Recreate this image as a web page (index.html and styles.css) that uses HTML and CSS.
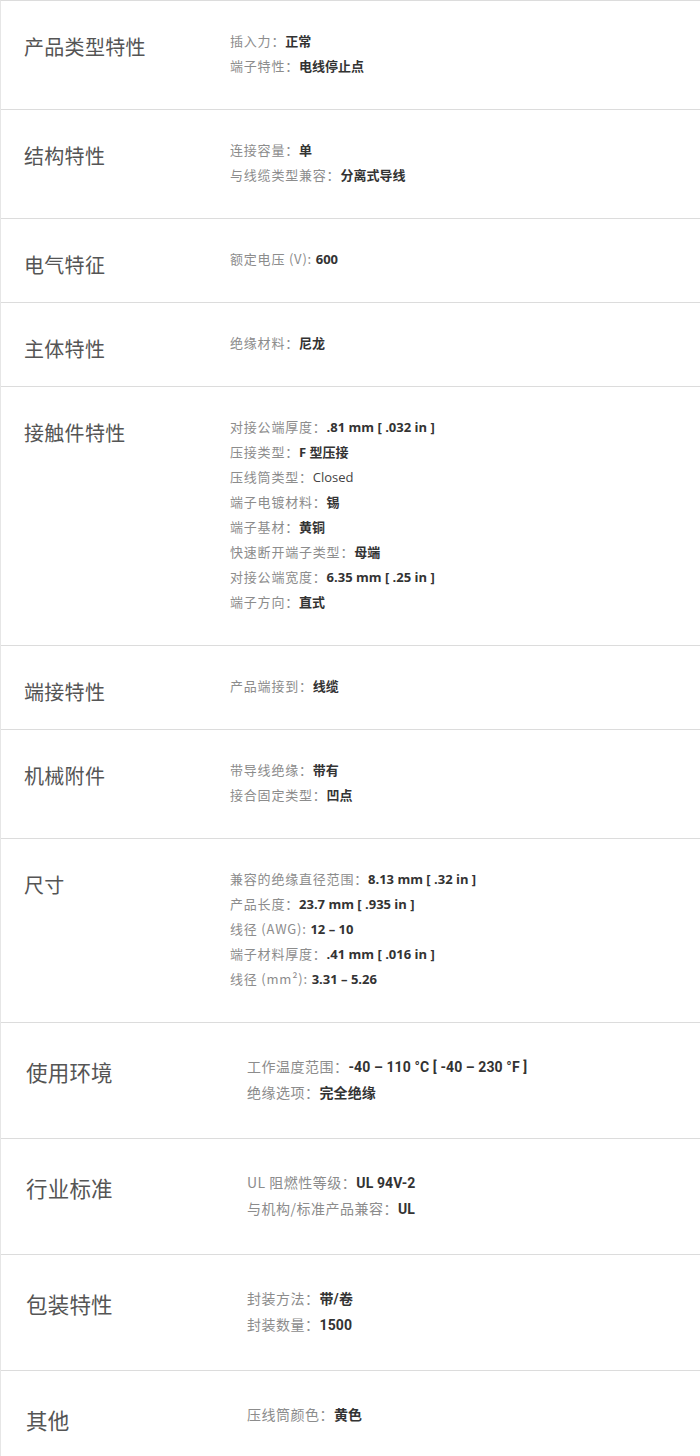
FILE: index.html
```html
<!DOCTYPE html>
<html lang="zh-CN">
<head>
<meta charset="utf-8">
<title>产品特性</title>
<link rel="stylesheet" href="styles.css">
</head>
<body>
<div class="spec-table">
  <div class="spec-row">
    <div class="spec-label">产品类型特性</div>
    <ul class="spec-values">
      <li><span class="k">插入力：</span><span class="v">正常</span></li>
      <li><span class="k">端子特性：</span><span class="v">电线停止点</span></li>
    </ul>
  </div>
  <div class="spec-row">
    <div class="spec-label">结构特性</div>
    <ul class="spec-values">
      <li><span class="k">连接容量：</span><span class="v">单</span></li>
      <li><span class="k">与线缆类型兼容：</span><span class="v">分离式导线</span></li>
    </ul>
  </div>
  <div class="spec-row">
    <div class="spec-label">电气特征</div>
    <ul class="spec-values">
      <li><span class="k">额定电压 (V):</span> <span class="v">600</span></li>
    </ul>
  </div>
  <div class="spec-row">
    <div class="spec-label">主体特性</div>
    <ul class="spec-values">
      <li><span class="k">绝缘材料：</span><span class="v">尼龙</span></li>
    </ul>
  </div>
  <div class="spec-row">
    <div class="spec-label">接触件特性</div>
    <ul class="spec-values">
      <li><span class="k">对接公端厚度：</span><span class="v">.81 mm [ .032 in ]</span></li>
      <li><span class="k">压接类型：</span><span class="v">F 型压接</span></li>
      <li><span class="k">压线筒类型：</span><span class="v plain">Closed</span></li>
      <li><span class="k">端子电镀材料：</span><span class="v">锡</span></li>
      <li><span class="k">端子基材：</span><span class="v">黄铜</span></li>
      <li><span class="k">快速断开端子类型：</span><span class="v">母端</span></li>
      <li><span class="k">对接公端宽度：</span><span class="v">6.35 mm [ .25 in ]</span></li>
      <li><span class="k">端子方向：</span><span class="v">直式</span></li>
    </ul>
  </div>
  <div class="spec-row">
    <div class="spec-label">端接特性</div>
    <ul class="spec-values">
      <li><span class="k">产品端接到：</span><span class="v">线缆</span></li>
    </ul>
  </div>
  <div class="spec-row">
    <div class="spec-label">机械附件</div>
    <ul class="spec-values">
      <li><span class="k">带导线绝缘：</span><span class="v">带有</span></li>
      <li><span class="k">接合固定类型：</span><span class="v">凹点</span></li>
    </ul>
  </div>
  <div class="spec-row">
    <div class="spec-label">尺寸</div>
    <ul class="spec-values">
      <li><span class="k">兼容的绝缘直径范围：</span><span class="v">8.13 mm [ .32 in ]</span></li>
      <li><span class="k">产品长度：</span><span class="v">23.7 mm [ .935 in ]</span></li>
      <li><span class="k">线径 (AWG):</span> <span class="v">12 – 10</span></li>
      <li><span class="k">端子材料厚度：</span><span class="v">.41 mm [ .016 in ]</span></li>
      <li><span class="k">线径 (mm²):</span> <span class="v">3.31 – 5.26</span></li>
    </ul>
  </div>
  <div class="spec-row spec-row--large">
    <div class="spec-label">使用环境</div>
    <ul class="spec-values">
      <li><span class="k">工作温度范围：</span><span class="v">-40 – 110 °C [ -40 – 230 °F ]</span></li>
      <li><span class="k">绝缘选项：</span><span class="v">完全绝缘</span></li>
    </ul>
  </div>
  <div class="spec-row spec-row--large">
    <div class="spec-label">行业标准</div>
    <ul class="spec-values">
      <li><span class="k">UL 阻燃性等级：</span><span class="v">UL 94V-2</span></li>
      <li><span class="k">与机构/标准产品兼容：</span><span class="v">UL</span></li>
    </ul>
  </div>
  <div class="spec-row spec-row--large">
    <div class="spec-label">包装特性</div>
    <ul class="spec-values">
      <li><span class="k">封装方法：</span><span class="v">带/卷</span></li>
      <li><span class="k">封装数量：</span><span class="v">1500</span></li>
    </ul>
  </div>
  <div class="spec-row spec-row--large">
    <div class="spec-label">其他</div>
    <ul class="spec-values">
      <li><span class="k">压线筒颜色：</span><span class="v">黄色</span></li>
    </ul>
  </div>
</div>
</body>
</html>
```

FILE: styles.css
```css
html, body {
  margin: 0;
  padding: 0;
  background: #ffffff;
}

body {
  font-family: "Noto Sans CJK SC", "Noto Sans", sans-serif;
  color: #333333;
}

.spec-table {
  border-top: 1px solid #dcdcdc;
  border-left: 1px solid #e6e6e6;
}

.spec-row {
  display: grid;
  grid-template-columns: 206px 1fr;
  align-items: start;
  padding: 27px 0 31px 23px;
  border-bottom: 1px solid #dcdcdc;
}

.spec-label {
  height: 25px;
  margin-top: 6px;
  margin-bottom: -6px;
  font-size: 20px;
  line-height: 25px;
  color: #555555;
  letter-spacing: 0.3px;
  white-space: nowrap;
}

.spec-values {
  list-style: none;
  margin: 0;
  padding: 0;
}

.spec-values li {
  height: 25px;
  font-size: 13px;
  line-height: 25px;
  letter-spacing: 0.8px;
  white-space: nowrap;
}

.k {
  color: #8c8c8c;
}

.v {
  color: #333333;
  font-weight: 700;
  font-family: "Open Sans", "Noto Sans CJK SC", sans-serif;
  letter-spacing: 0;
}

.v.plain {
  font-weight: 400;
  color: #444444;
}

.spec-row--large {
  grid-template-columns: 221px 1fr;
  padding: 30px 0 33px 25px;
}

.spec-row--large .spec-label {
  height: 26px;
  font-size: 21.5px;
  line-height: 26px;
  letter-spacing: 0.2px;
}

.spec-row--large .spec-values li {
  height: 26px;
  font-size: 14px;
  line-height: 26px;
  letter-spacing: 0.5px;
}

.spec-row--large .v {
  font-family: "Roboto", "Noto Sans CJK SC", sans-serif;
  letter-spacing: 0.1px;
}
```
